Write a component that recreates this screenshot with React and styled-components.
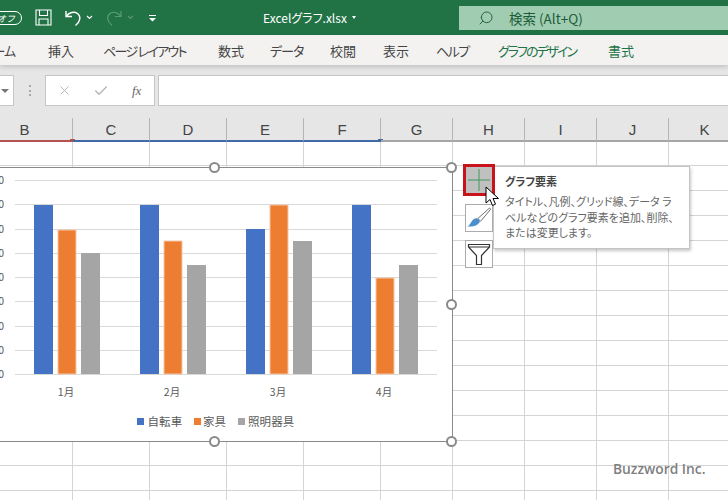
import React from "react";
import styled, { createGlobalStyle } from "styled-components";
import { X, Check, Search } from "lucide-react";

const FONT = `"Noto Sans CJK JP", "Noto Sans", sans-serif`;

const GlobalStyle = createGlobalStyle`
    html, body {
        margin: 0;
        padding: 0;
        background: #ffffff;
    }
    body {
        font-family: ${FONT};
    }
`;

const Window = styled.div`
    position: relative;
    display: flex;
    flex-direction: column;
    width: 728px;
    height: 500px;
    overflow: hidden;
`;

const TitleBar = styled.div`
    position: relative;
    display: flex;
    align-items: center;
    height: 35px;
    flex: none;
    background: #217346;
    color: #ffffff;
`;

const QuickAccess = styled.div`
    display: flex;
    align-items: center;
    width: 263px;
    flex: none;
`;

const AutoSave = styled.div`
    width: 30px;
    height: 14px;
    margin-left: -8px;
    border: 1px solid #ffffff;
    border-radius: 8px;
    font-size: 9px;
    line-height: 14px;
    font-style: italic;
    text-align: right;
    padding-right: 6px;
    box-sizing: border-box;
`;

const QuickIcon = styled.svg`
    display: block;
    flex: none;
    margin-left: ${(p) => p.$left}px;
`;

const FileName = styled.div`
    display: flex;
    align-items: center;
    gap: 5px;
    font-size: 12px;
    font-feature-settings: "palt";
    width: 196px;
    flex: none;
`;

const FileCaret = styled.div`
    width: 0;
    height: 0;
    border-left: 2.5px solid transparent;
    border-right: 2.5px solid transparent;
    border-top: 3px solid #ffffff;
`;

const SearchBox = styled.div`
    display: flex;
    align-items: center;
    align-self: flex-start;
    margin-top: 6px;
    height: 24px;
    flex: 1;
    padding-left: 19px;
    gap: 15px;
    background: #a0cdb1;
    color: #1d5c3a;
    font-size: 13.5px;
`;

const Ribbon = styled.div`
    display: flex;
    align-items: center;
    height: 30px;
    flex: none;
    background: #f3f2f1;
    font-size: 13px;
    font-feature-settings: "palt";
    overflow: hidden;
    position: relative;
    z-index: 1;
    box-shadow: 0 2px 5px rgba(0, 0, 0, 0.16);
`;

const RibbonTab = styled.div`
    flex: none;
    width: ${(p) => p.$width}px;
    margin-left: ${(p) => p.$left}px;
    white-space: nowrap;
    letter-spacing: ${(p) => p.$tight || 0}px;
    color: ${(p) => (p.$context ? "#217346" : "#444444")};
`;

const FormulaBar = styled.div`
    display: flex;
    align-items: flex-end;
    height: 41px;
    flex: none;
    background: #e6e6e6;
`;

const FieldBox = styled.div`
    display: flex;
    align-items: center;
    height: 31px;
    box-sizing: border-box;
    background: #ffffff;
    border: 1px solid #c6c6c6;
`;

const NameBox = styled(FieldBox)`
    width: 15px;
    margin-left: -1px;
    justify-content: flex-end;
    padding-right: 4px;
    color: #666666;
`;

const NameCaret = styled.div`
    width: 0;
    height: 0;
    border-left: 4px solid transparent;
    border-right: 4px solid transparent;
    border-top: 4px solid #777777;
`;

const Grip = styled.div`
    width: 2px;
    height: 11px;
    margin: 0 14px 10px 15px;
    background: repeating-linear-gradient(#a8a8a8 0 2px, transparent 2px 4.5px);
`;

const ActionBox = styled(FieldBox)`
    width: 110px;
    padding-left: 11px;
    gap: 21px;
    color: #b4b4b4;
`;

const FxLabel = styled.span`
    margin-left: 2px;
    color: #666666;
    font-family: "Liberation Serif", serif;
    font-style: italic;
    font-size: 13px;
`;

const FormulaInput = styled(FieldBox)`
    flex: 1;
    margin-left: 3px;
    border-right: 0;
`;

const COLUMNS = "73px 77px 77px 77px 77px 72px 72px 72px 72px 72px";

const ColumnHeader = styled.div`
    display: grid;
    grid-template-columns: ${COLUMNS};
    height: 36px;
    flex: none;
    box-sizing: border-box;
    padding-top: 12px;
    background: #e6e6e6;
`;

const HeaderCell = styled.div`
    position: relative;
    display: flex;
    align-items: center;
    justify-content: center;
    box-sizing: border-box;
    padding-right: ${(p) => p.$shift || 0}px;
    border-right: 1px solid #b4b4b4;
    border-bottom: 2px solid ${(p) => (p.$mark === "red" ? "#b5514f" : p.$mark === "blue" ? "#3f6aa5" : "#a6a6a6")};
    font-family: "Liberation Sans", sans-serif;
    font-size: 15px;
    color: #444444;

    &::after {
        content: "";
        display: ${(p) => (p.$corner ? "block" : "none")};
        position: absolute;
        right: -3px;
        bottom: -2px;
        width: 5px;
        height: 3px;
        background: ${(p) => (p.$mark === "red" ? "#b5514f" : "#3f6aa5")};
    }
`;

const Sheet = styled.div`
    position: relative;
    flex: 1;
    overflow: hidden;
`;

const CellGrid = styled.div`
    display: grid;
    grid-template-columns: ${COLUMNS};
    grid-auto-rows: 25px;
    margin-top: -1px;
`;

const Cell = styled.div`
    box-sizing: border-box;
    border-right: 1px solid #d4d4d4;
    border-bottom: 1px solid #d4d4d4;
`;

const ChartFrame = styled.div`
    position: absolute;
    left: -2px;
    top: 25px;
    width: 455px;
    height: 275px;
    box-sizing: border-box;
    background: #ffffff;
    border: 1px solid #8a8a8a;
`;

const ChartCanvas = styled.svg`
    display: block;
    font-family: ${FONT};
`;

const Handle = styled.div`
    position: absolute;
    left: ${(p) => p.$x}px;
    top: ${(p) => p.$y}px;
    width: 11px;
    height: 11px;
    box-sizing: border-box;
    border: 2px solid #8a8a8a;
    border-radius: 50%;
    background: #ffffff;
`;

const ChartTools = styled.div`
    position: absolute;
    left: 463px;
    top: 22px;
    display: flex;
    flex-direction: column;
    align-items: center;
    width: 32px;
    gap: 8px;
`;

const ToolButton = styled.div`
    display: flex;
    align-items: center;
    justify-content: center;
    box-sizing: border-box;
    width: ${(p) => (p.$active ? 32 : 28)}px;
    height: ${(p) => (p.$active ? 32 : 28)}px;
    background: ${(p) => (p.$active ? "#c0c0c0" : "#ffffff")};
    border: ${(p) => (p.$active ? "3px solid #c8121c" : "1px solid #ababab")};
`;

const Tooltip = styled.div`
    position: absolute;
    left: 493px;
    top: 24px;
    width: 197px;
    height: 83px;
    box-sizing: border-box;
    padding: 6px 11px;
    background: #ffffff;
    border: 1px solid #c4c4c4;
    box-shadow: 1px 2px 3px rgba(0, 0, 0, 0.22);
    font-feature-settings: "palt";
`;

const TooltipTitle = styled.div`
    font-size: 11px;
    font-weight: 700;
    line-height: 16px;
    color: #444444;
`;

const TooltipBody = styled.div`
    margin-top: 5px;
    font-size: 11px;
    line-height: 15.5px;
    color: #666666;
    white-space: nowrap;
`;

const Pointer = styled.svg`
    position: absolute;
    left: 485px;
    top: 44px;
`;

const Watermark = styled.div`
    position: absolute;
    left: 613px;
    top: 317px;
    font-family: "Open Sans", sans-serif;
    font-weight: 600;
    font-size: 13.8px;
    line-height: 20px;
    color: #7f7f7f;
`;

const tabs = [
    { label: "ホーム", left: -19, width: 39, tight: -1 },
    { label: "挿入", left: 28, width: 26 },
    { label: "ページ レイアウト", left: 29, width: 86, tight: -1.7 },
    { label: "数式", left: 29, width: 26 },
    { label: "データ", left: 26, width: 33, tight: -1 },
    { label: "校閲", left: 27, width: 26 },
    { label: "表示", left: 27, width: 26 },
    { label: "ヘルプ", left: 27, width: 33, tight: -1.5 },
    { label: "グラフのデザイン", left: 29, width: 80, context: true, tight: -2 },
    { label: "書式", left: 30, width: 26, context: true },
];

const headers = [
    { label: "B", mark: "red", corner: true, shift: 23 },
    { label: "C", mark: "blue" },
    { label: "D", mark: "blue" },
    { label: "E", mark: "blue" },
    { label: "F", mark: "blue", corner: true },
    { label: "G" },
    { label: "H" },
    { label: "I" },
    { label: "J" },
    { label: "K" },
];

const BLUE = "#4472c4";
const ORANGE = "#ed7d31";
const GRAY = "#a5a5a5";
const BASE = 374;

const groups = [
    { label: "1月", x: 34, tops: [205, 230, 253] },
    { label: "2月", x: 140, tops: [205, 241, 265] },
    { label: "3月", x: 246, tops: [229, 205, 241] },
    { label: "4月", x: 352, tops: [205, 278, 265] },
];

const ticks = [180, 204, 229, 253, 277, 301, 326, 350, 374];
const tickLabels = ["400", "350", "300", "250", "200", "150", "100", "50", "0"];

const legend = [
    { label: "自転車", color: BLUE, x: 137, textX: 147.5 },
    { label: "家具", color: ORANGE, x: 194, textX: 203 },
    { label: "照明器具", color: GRAY, x: 238, textX: 248 },
];

function Chart() {
    return (
        <ChartCanvas width="453" height="273">
            <g transform="translate(1,-168)">
                {ticks.map((y, i) => (
                    <g key={y}>
                        <line x1="15" x2="437" y1={y + 0.5} y2={y + 0.5} stroke="#d9d9d9" />
                        <text x="4" y={y + 4} textAnchor="end" fontSize="10.5" fill="#595959">{tickLabels[i]}</text>
                    </g>
                ))}
                {groups.map((group) => (
                    <g key={group.label}>
                        <rect x={group.x} y={group.tops[0]} width="19" height={BASE - group.tops[0]} fill={BLUE} />
                        <rect x={group.x + 24} y={group.tops[1]} width="18" height={BASE - group.tops[1]} fill={ORANGE} stroke="#f3c8aa" />
                        <rect x={group.x + 47} y={group.tops[2]} width="19" height={BASE - group.tops[2]} fill={GRAY} />
                        <text x={group.x + 32} y="396" textAnchor="middle" fontSize="10.5" fill="#595959">{group.label}</text>
                    </g>
                ))}
                {legend.map((item) => (
                    <g key={item.label}>
                        <rect x={item.x} y="418" width="7" height="7" fill={item.color} />
                        <text x={item.textX} y="425.5" fontSize="11.5" letterSpacing="0.1" fill="#595959">{item.label}</text>
                    </g>
                ))}
            </g>
        </ChartCanvas>
    );
}

export default function App() {
    const cells = Array.from({ length: 150 });
    return (
        <>
            <GlobalStyle />
            <Window>
                <TitleBar>
                    <QuickAccess>
                        <AutoSave>オフ</AutoSave>
                        <QuickIcon $left={13} width="17" height="17" viewBox="0 0 17 17" fill="none" stroke="#ffffff" strokeWidth="1.1">
                            <path d="M1 1h15v15H1zM4.5 1v5.5h8V1M4 16v-6h9v6" />
                        </QuickIcon>
                        <QuickIcon $left={13} width="17" height="18" viewBox="0 0 17 18" fill="none" stroke="#ffffff" strokeWidth="1.4">
                            <path d="M1 2v5.500h6M1.500 7C4 3.500 9 2 12.500 4.500c3.500 2.600 3.300 7.500-2 12" />
                        </QuickIcon>
                        <QuickIcon $left={4} width="7" height="5" viewBox="0 0 7 5" fill="none" stroke="#ffffff" strokeWidth="1.2">
                            <path d="M1 1l2.500 2.500L6 1" />
                        </QuickIcon>
                        <QuickIcon $left={13} width="16" height="18" viewBox="0 0 16 18" fill="none" stroke="#5a9a78" strokeWidth="1.2">
                            <path d="M15 2v5.500H9M14.500 7C12 3.500 7.500 2 4 4.500c-3.500 2.600-3.300 7.500 2 12" />
                        </QuickIcon>
                        <QuickIcon $left={5} width="7" height="5" viewBox="0 0 7 5" fill="none" stroke="#5a9a78" strokeWidth="1.1">
                            <path d="M1 1l2.500 2.500L6 1" />
                        </QuickIcon>
                        <QuickIcon $left={15} width="8" height="8" viewBox="0 0 8 8" fill="#ffffff">
                            <path d="M0 1h7v1H0zM0 4h7L3.500 7.500z" />
                        </QuickIcon>
                    </QuickAccess>
                    <FileName>Excelグラフ.xlsx<FileCaret /></FileName>
                    <SearchBox>
                        <Search size={16} strokeWidth={1.4} style={{ transform: "scaleX(-1)" }} />
                        <span>検索 (Alt+Q)</span>
                    </SearchBox>
                </TitleBar>
                <Ribbon>
                    {tabs.map((tab) => (
                        <RibbonTab key={tab.label} $context={tab.context} $left={tab.left} $width={tab.width} $tight={tab.tight}>{tab.label}</RibbonTab>
                    ))}
                </Ribbon>
                <FormulaBar>
                    <NameBox><NameCaret /></NameBox>
                    <Grip />
                    <ActionBox>
                        <X size={15} strokeWidth={1.5} />
                        <Check size={16} strokeWidth={2} />
                        <FxLabel>fx</FxLabel>
                    </ActionBox>
                    <FormulaInput />
                </FormulaBar>
                <ColumnHeader>
                    {headers.map((h) => (
                        <HeaderCell key={h.label} $mark={h.mark} $corner={h.corner} $shift={h.shift}>{h.label}</HeaderCell>
                    ))}
                </ColumnHeader>
                <Sheet>
                    <CellGrid>
                        {cells.map((_, i) => <Cell key={i} />)}
                    </CellGrid>
                    <ChartFrame>
                        <Chart />
                        <Handle $x={210} $y={-6} />
                        <Handle $x={447} $y={-6} />
                        <Handle $x={447} $y={131} />
                        <Handle $x={447} $y={268} />
                        <Handle $x={210} $y={268} />
                    </ChartFrame>
                    <Tooltip>
                        <TooltipTitle>グラフ要素</TooltipTitle>
                        <TooltipBody>
                            タイトル、凡例、グリッド線、データ ラ<br />
                            ベルなどのグラフ要素を追加、削除、<br />
                            または変更します。
                        </TooltipBody>
                    </Tooltip>
                    <ChartTools>
                        <ToolButton $active>
                            <svg width="22" height="22" viewBox="0 0 22 22" stroke="#3f9a5c" strokeWidth="1">
                                <path d="M11 0v22M0 11h22" />
                            </svg>
                        </ToolButton>
                        <ToolButton>
                            <svg width="26" height="26" viewBox="0 0 26 26">
                                <path d="M23.500 3l1.200 1.200-10 12-3-2.500z" fill="#ffffff" stroke="#707070" strokeWidth="1" />
                                <path d="M10.500 13l3.500 3c-1 3.500-5 6-13 5.500 4-1 3.500-7 9.500-8.500z" fill="#4a90d0" />
                            </svg>
                        </ToolButton>
                        <ToolButton>
                            <svg width="24" height="24" viewBox="0 0 24 24" fill="none" stroke="#333333" strokeWidth="1.2">
                                <path d="M1.500 2.500h21v2.500l-8 8.500v9h-5v-9l-8-8.500zM1.500 5h21" />
                            </svg>
                        </ToolButton>
                    </ChartTools>
                    <Pointer width="14" height="22" viewBox="0 0 14 22">
                        <path d="M1 1v16l4-3.500 2.500 6 3-1.300-2.500-5.700h5.500z" fill="#ffffff" stroke="#000000" strokeWidth="1" />
                    </Pointer>
                    <Watermark>Buzzword Inc.</Watermark>
                </Sheet>
            </Window>
        </>
    );
}
